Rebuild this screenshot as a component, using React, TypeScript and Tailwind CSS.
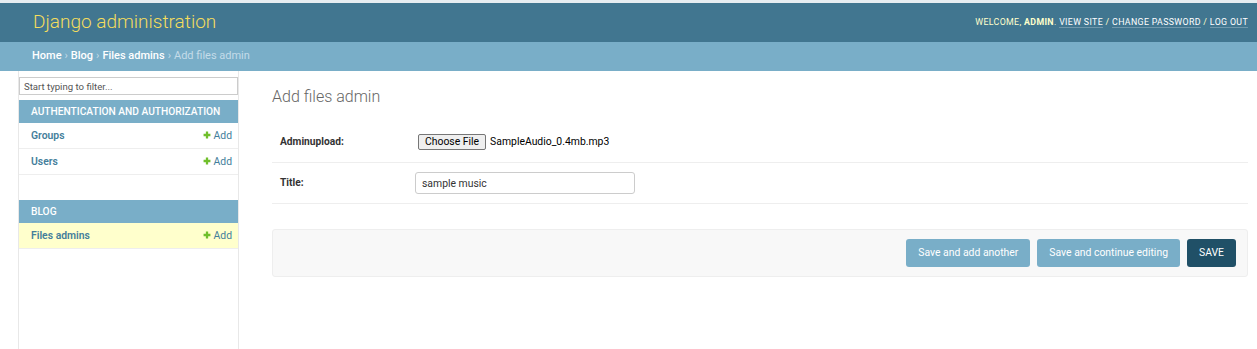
import React from 'react';

const AddLink: React.FC = () => (
  <a className="flex items-center gap-[3px] text-[#447e9b] font-normal">
    <svg width="8" height="8" viewBox="0 0 14 14">
      <path d="M5 1h4v4h4v4H9v4H5V9H1V5h4z" fill="#70bf2b" />
    </svg>
    Add
  </a>
);

const SidebarRow: React.FC<{ name: string; selected?: boolean }> = ({ name, selected }) => (
  <div
    className={`h-[26px] flex items-center justify-between pl-[12px] pr-[6px] border-b border-[#eee] text-[10.4px] ${
      selected ? 'bg-[#ffffcc]' : ''
    }`}
  >
    <a className="font-semibold text-[#447e9b]">{name}</a>
    <AddLink />
  </div>
);

const Caption: React.FC<{ children: React.ReactNode }> = ({ children }) => (
  <div className="h-[23px] flex items-center pl-[12px] bg-[#79aec8] text-white text-[10.2px] font-medium uppercase">
    {children}
  </div>
);

const App: React.FC = () => {
  return (
    <div className="h-screen flex flex-col font-['Roboto',sans-serif] bg-white overflow-hidden text-[#333]">
      <div className="h-[3px] bg-[#e6edf1]" />

      {/* header */}
      <header className="h-[39px] shrink-0 bg-[#417690] flex items-center justify-between pl-[33px] pr-[9px]">
        <h1 className="text-[19px] font-light text-[#f5dd5d]">Django administration</h1>
        <div className="text-[8.8px] uppercase tracking-[0.35px] text-[#ffffcc]">
          Welcome, <strong className="font-bold">admin</strong>.{' '}
          <a className="text-white border-b border-white/25">View site</a> /{' '}
          <a className="text-white border-b border-white/25">Change password</a> /{' '}
          <a className="text-white border-b border-white/25">Log out</a>
        </div>
      </header>

      {/* breadcrumbs */}
      <div className="h-[29px] shrink-0 bg-[#79aec8] flex items-center pl-[32px] text-[11px] text-[#c4dce8]">
        <a className="text-white font-medium">Home</a>
        <span className="mx-[3px]">›</span>
        <a className="text-white font-medium">Blog</a>
        <span className="mx-[3px]">›</span>
        <a className="text-white font-medium">Files admins</a>
        <span className="mx-[3px]">›</span>
        <span>Add files admin</span>
      </div>

      <div className="flex flex-1 min-h-0">
        {/* sidebar */}
        <nav className="ml-[18px] w-[221px] shrink-0 border-l border-r border-[#e8e8e8] flex flex-col">
          <input
            className="mt-[6px] h-[18px] w-full border border-[#ccc] px-[4px] text-[9.6px] text-[#333] placeholder:text-[#555] outline-none"
            placeholder="Start typing to filter..."
          />
          <div className="mt-[5px]">
            <Caption>Authentication and Authorization</Caption>
            <SidebarRow name="Groups" />
            <SidebarRow name="Users" />
          </div>
          <div className="mt-[25px]">
            <Caption>Blog</Caption>
            <SidebarRow name="Files admins" selected />
          </div>
        </nav>

        {/* content */}
        <main className="flex-1 pl-[33px] pr-[9px] pt-[16px]">
          <h1 className="text-[16px] font-light text-[#666] leading-[19px]">Add files admin</h1>

          <div className="mt-[16px]">
            <div className="h-[41px] flex items-center border-b border-[#eee] pl-[8px]">
              <label className="w-[138px] text-[10.2px] font-bold text-[#333]">Adminupload:</label>
              <div className="flex items-center gap-[4px]">
                <button className="h-[16px] px-[6px] bg-[#efefef] border border-[#767676] rounded-[2px] text-[10.4px] text-black leading-none">
                  Choose File
                </button>
                <span className="text-[10.4px] text-black">SampleAudio_0.4mb.mp3</span>
              </div>
            </div>
            <div className="h-[41px] flex items-center border-b border-[#eee] pl-[8px]">
              <label className="w-[135px] text-[10.2px] font-bold text-[#333]">Title:</label>
              <input
                className="h-[22px] w-[220px] border border-[#ccc] rounded-[3px] px-[6px] text-[10.4px] text-[#333] outline-none"
                defaultValue="sample music"
              />
            </div>
          </div>

          <div className="mt-[25px] h-[48px] bg-[#f8f8f8] border border-[#eee] rounded-[3px] flex items-center justify-end gap-[7px] pr-[11px]">
            <button className="h-[28px] px-[12px] rounded-[3px] bg-[#79aec8] text-white text-[10.4px]">
              Save and add another
            </button>
            <button className="h-[28px] px-[12px] rounded-[3px] bg-[#79aec8] text-white text-[10.4px]">
              Save and continue editing
            </button>
            <button className="h-[28px] px-[12px] rounded-[3px] bg-[#205067] text-white text-[10.4px] uppercase">
              Save
            </button>
          </div>
        </main>
      </div>
    </div>
  );
};

export default App;
